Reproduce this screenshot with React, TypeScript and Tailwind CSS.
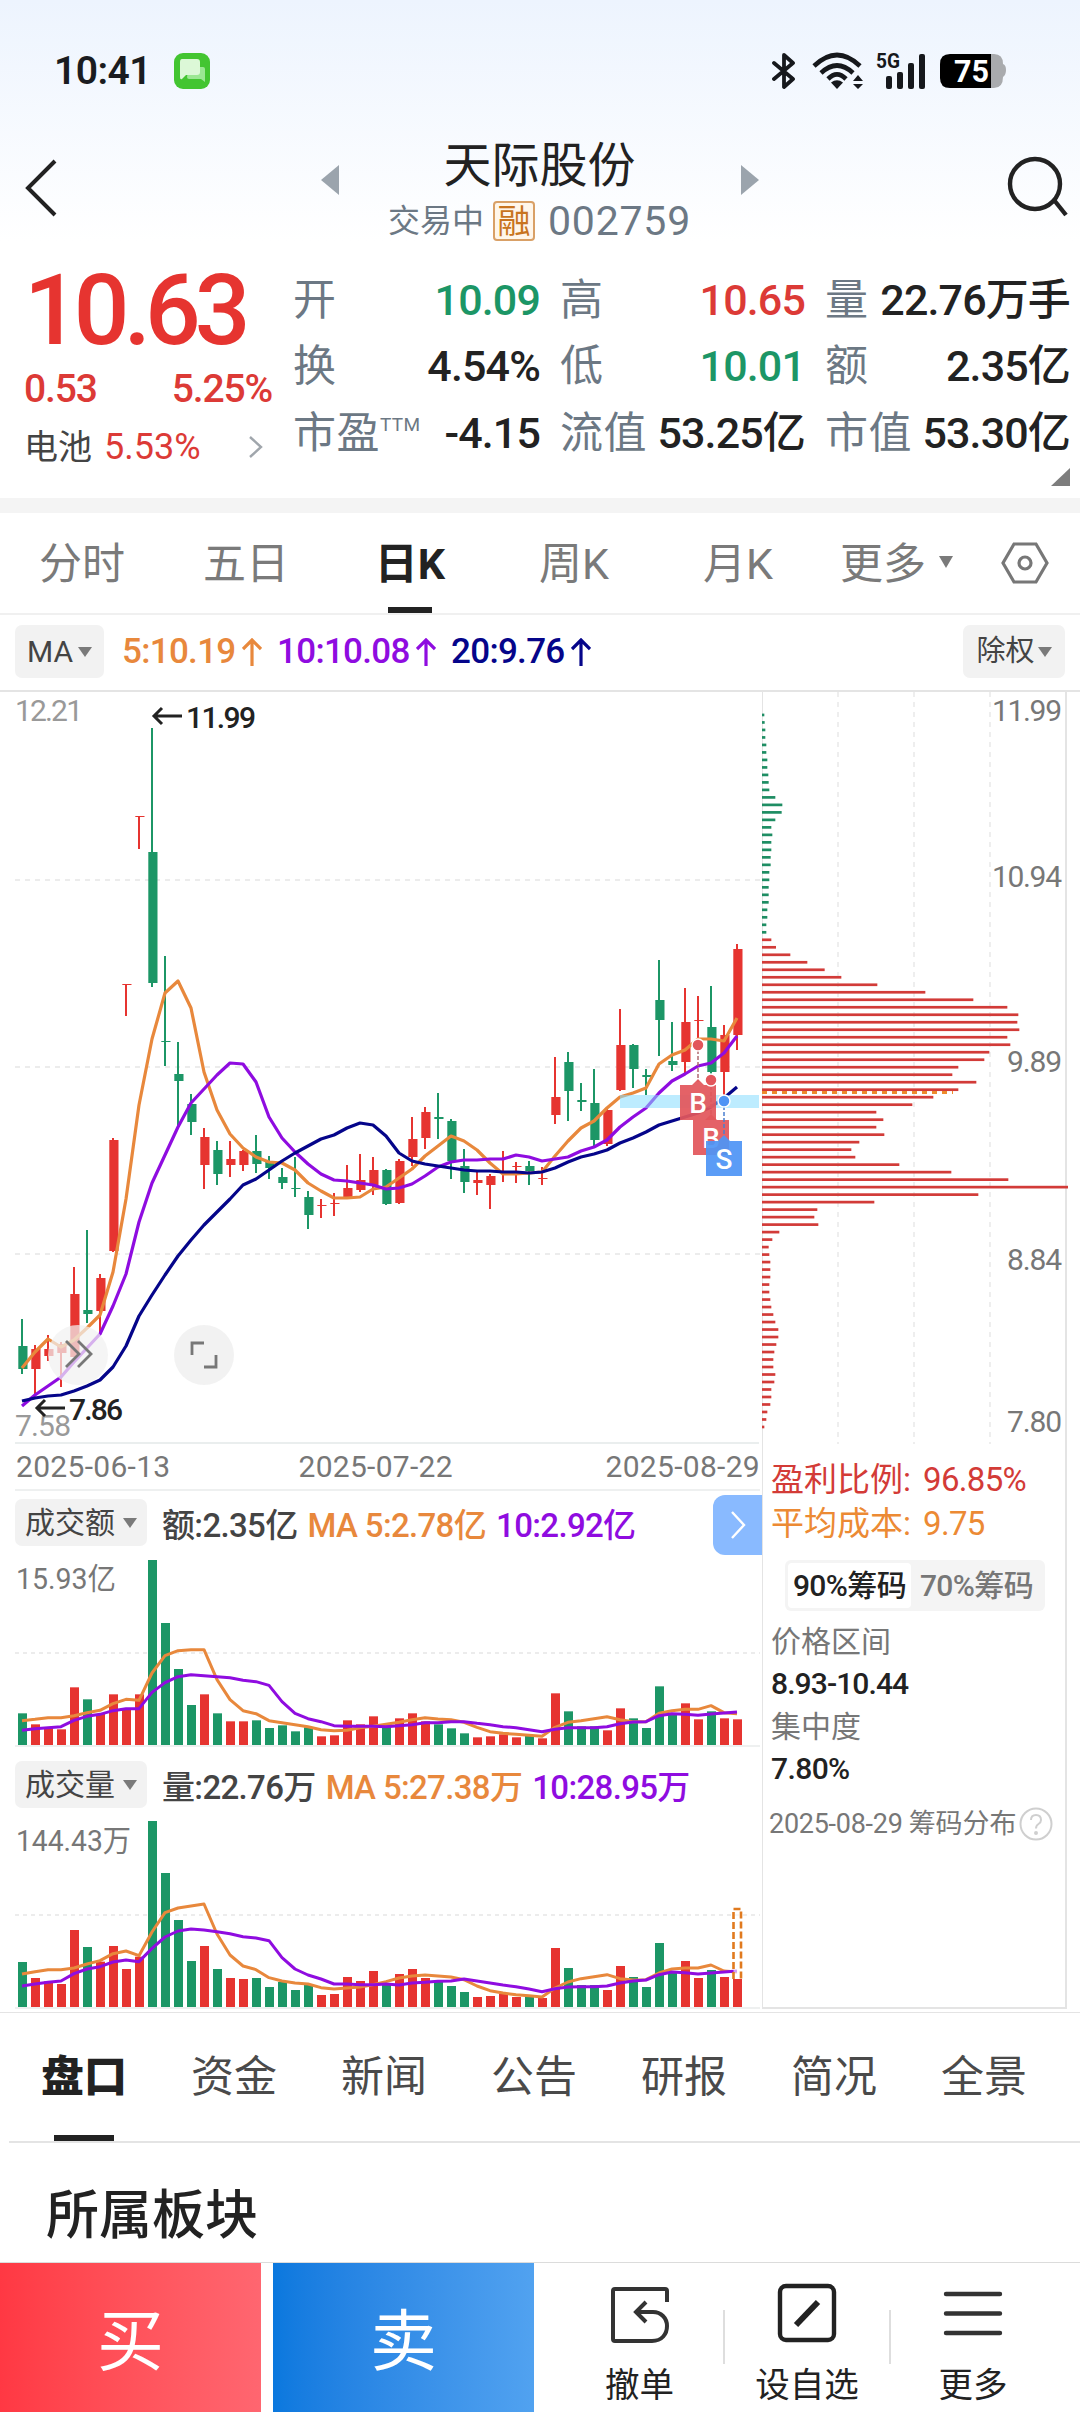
import type { ReactNode } from "react";

const UP = "#e63430";
const DOWN = "#1c9666";
const ORANGE = "#e8883c";
const PURPLE = "#8f0ce0";
const NAVY = "#05058a";

// [up, high, bodyTop, bodyBottom, low] in chart pixels
const candles = [
  [0, 1319, 1346, 1369, 1374], [1, 1345, 1349, 1369, 1396], [1, 1335, 1349, 1356, 1361], [1, 1342, 1344, 1353, 1387],
  [1, 1267, 1294, 1357, 1357], [0, 1230, 1310, 1314, 1323], [1, 1274, 1278, 1311, 1333], [1, 1138, 1140, 1251, 1252],
  [1, 984, 984, 985, 1016], [1, 816, 816, 817, 849], [0, 728, 852, 983, 987], [0, 956, 1041, 1042, 1066],
  [0, 1042, 1074, 1081, 1126], [0, 1094, 1104, 1122, 1135], [1, 1128, 1137, 1165, 1189], [0, 1141, 1150, 1174, 1185],
  [1, 1141, 1159, 1165, 1177], [1, 1150, 1151, 1165, 1171], [0, 1135, 1151, 1164, 1173], [0, 1156, 1161, 1168, 1179],
  [0, 1168, 1177, 1183, 1189], [0, 1157, 1188, 1189, 1197], [0, 1191, 1197, 1215, 1229], [1, 1199, 1205, 1206, 1218],
  [1, 1193, 1203, 1204, 1216], [1, 1165, 1188, 1197, 1199], [1, 1154, 1180, 1190, 1192], [1, 1157, 1170, 1185, 1195],
  [0, 1169, 1170, 1204, 1205], [1, 1159, 1161, 1203, 1204], [1, 1117, 1139, 1157, 1166], [1, 1107, 1112, 1138, 1149],
  [0, 1093, 1117, 1119, 1139], [0, 1119, 1121, 1161, 1179], [0, 1149, 1166, 1182, 1193], [1, 1172, 1180, 1183, 1195],
  [1, 1174, 1176, 1185, 1209], [1, 1151, 1172, 1173, 1182], [1, 1162, 1166, 1167, 1183], [0, 1161, 1166, 1171, 1185],
  [1, 1167, 1178, 1179, 1185], [1, 1057, 1097, 1115, 1124], [0, 1052, 1062, 1091, 1121], [0, 1083, 1100, 1102, 1111],
  [0, 1069, 1103, 1140, 1146], [1, 1109, 1110, 1144, 1146], [1, 1009, 1045, 1090, 1091], [0, 1044, 1045, 1069, 1088],
  [0, 1069, 1075, 1077, 1095], [0, 960, 1000, 1020, 1056], [0, 1022, 1061, 1065, 1071], [1, 988, 1022, 1062, 1073],
  [1, 996, 1020, 1021, 1043], [0, 986, 1027, 1072, 1076], [1, 1025, 1035, 1072, 1096], [1, 944, 949, 1035, 1050],
];

const ma5 = [
  1368, 1352, 1339, 1347, 1340, 1328, 1315, 1272, 1199, 1105, 1039, 993, 981, 1008, 1072, 1110, 1134, 1148, 1157, 1162,
  1163, 1170, 1183, 1191, 1198, 1198, 1197, 1189, 1187, 1178, 1169, 1156, 1146, 1136, 1141, 1150, 1163, 1174, 1174, 1173,
  1172, 1156, 1141, 1128, 1121, 1108, 1097, 1093, 1088, 1064, 1055, 1050, 1039, 1039, 1041, 1018,
];
const ma10 = [
  1406, 1395, 1386, 1377, 1362, 1348, 1334, 1306, 1274, 1222, 1183, 1155, 1127, 1103, 1089, 1075, 1063, 1064, 1082, 1117,
  1138, 1152, 1164, 1174, 1180, 1181, 1183, 1185, 1189, 1188, 1184, 1176, 1167, 1162, 1160, 1160, 1159, 1159, 1155, 1157,
  1161, 1159, 1157, 1151, 1147, 1140, 1127, 1117, 1108, 1093, 1081, 1074, 1066, 1063, 1053, 1036,
];
const ma20 = [
  1401, 1398, 1396, 1395, 1391, 1386, 1380, 1367, 1346, 1316, 1295, 1275, 1256, 1240, 1225, 1212, 1199, 1185, 1179, 1170,
  1161, 1153, 1146, 1139, 1135, 1128, 1123, 1125, 1136, 1153, 1161, 1164, 1166, 1168, 1170, 1171, 1171, 1172, 1172, 1173,
  1172, 1168, 1162, 1157, 1154, 1150, 1143, 1138, 1132, 1125, 1121, 1117, 1113, 1107, 1098, 1087,
];

// heights above the base line, in thirds of a pixel
const amount = {
  bars: [
    95, 62, 53, 47, 173, 137, 93, 152, 108, 152, 555, 366, 228, 120, 152, 95, 71, 71, 74, 51, 59, 41, 53, 26, 29, 74, 62,
    86, 59, 80, 95, 71, 62, 50, 35, 23, 26, 32, 23, 29, 20, 155, 101, 56, 56, 44, 110, 80, 51, 176, 95, 125, 77, 101, 80, 77,
  ],
  ma5: [
    73, 77, 82, 82, 88, 97, 104, 124, 137, 134, 216, 268, 283, 286, 286, 196, 136, 103, 94, 73, 67, 61, 55, 46, 43, 44, 52,
    56, 62, 68, 76, 82, 78, 76, 68, 53, 40, 35, 32, 29, 26, 53, 68, 73, 79, 85, 76, 70, 70, 95, 103, 107, 107, 118, 97, 94,
  ],
  ma10: [
    44, 49, 52, 55, 74, 86, 92, 103, 109, 109, 158, 187, 205, 211, 208, 205, 202, 194, 190, 179, 130, 95, 79, 70, 58, 56, 56,
    56, 55, 58, 61, 67, 67, 70, 70, 65, 61, 55, 52, 46, 40, 47, 52, 52, 52, 55, 64, 69, 70, 88, 94, 92, 89, 93, 96, 99,
  ],
};
const volume = {
  bars: [
    135, 87, 77, 69, 231, 180, 136, 183, 114, 151, 558, 402, 261, 138, 183, 114, 87, 84, 87, 60, 75, 51, 66, 36, 39, 90, 78,
    108, 69, 99, 114, 87, 78, 63, 45, 30, 33, 39, 30, 36, 27, 177, 117, 66, 66, 51, 123, 90, 60, 192, 102, 138, 87, 111, 90, 84,
  ],
  ma5: [
    99, 106, 112, 112, 117, 129, 139, 160, 168, 154, 225, 283, 297, 303, 309, 219, 156, 123, 112, 88, 78, 72, 69, 58, 54, 57,
    60, 67, 76, 87, 93, 96, 93, 90, 82, 63, 49, 42, 37, 34, 30, 57, 75, 85, 91, 97, 85, 81, 82, 102, 114, 117, 117, 126, 108, 105,
  ],
  ma10: [
    63, 69, 74, 78, 100, 114, 121, 135, 141, 136, 176, 210, 228, 234, 231, 226, 220, 211, 207, 199, 148, 114, 96, 84, 69, 69,
    67, 67, 69, 66, 72, 74, 77, 78, 84, 78, 72, 66, 61, 54, 46, 55, 60, 61, 61, 63, 72, 78, 81, 97, 105, 103, 99, 102, 105, 108,
  ],
};

const chips = [
  7, 8, 10, 10, 13, 13, 16, 16, 19, 20, 22, 40, 61, 59, 40, 28, 31, 28, 28, 26, 26, 22, 22, 20, 20, 20, 16, 16, 13, 13, 28,
  42, 85, 136, 188, 238, 346, 490, 634, 736, 769, 766, 772, 736, 745, 682, 667, 589, 571, 643, 589, 514, 451, 343, 364, 343,
  367, 292, 268, 280, 412, 568, 739, 918, 649, 337, 166, 157, 169, 52, 31, 20, 22, 25, 25, 25, 22, 22, 25, 28, 34, 40, 49,
  49, 43, 37, 34, 34, 40, 37, 28, 28, 25, 16, 13, 7,
];

const cx = (i: number) => 22 + i * 13;
const line = (ys: number[]) => ys.map((y, i) => `${cx(i)},${y}`).join(" ");

function Caret({ className = "" }: { className?: string }) {
  return (
    <svg viewBox="0 0 14 10" className={`h-[10px] w-[14px] ${className}`}>
      <path d="M0 0H14L7 10Z" fill="#7a7a7a" />
    </svg>
  );
}

function StatusBar() {
  return (
    <div className="flex h-[142px] shrink-0 items-start justify-between pt-[51px] pr-[74px] pl-[54px]">
      <div className="flex h-[40px] items-center">
        <span className="w-[96px] text-[39px] leading-none font-semibold tracking-[-0.015em] whitespace-nowrap text-[#1a1c20]">10:41</span>
        <svg viewBox="0 0 36 36" className="ml-[24px] h-[36px] w-[36px]">
          <rect width="36" height="36" rx="9" fill="#43c531" />
          <path d="M15 14h14q2 0 2 2v13l-4-3H15q-2 0-2-2Z" fill="#9be793" />
          <path d="M8 6h15q3 0 3 3v10q0 3-3 3H12l-4 4q-2 1-2-2V9q0-3 2-3Z" fill="#dcf8d7" />
        </svg>
      </div>
      <div className="flex h-[40px] items-center text-[#16181c]">
        <svg viewBox="0 0 24 38" className="h-[38px] w-[24px]" fill="none" stroke="currentColor" strokeWidth="3.8" strokeLinejoin="round" strokeLinecap="round">
          <path d="M2 11L21 27L12 35V3L21 11L2 27" />
        </svg>
        <svg viewBox="0 0 52 38" className="ml-[16px] h-[38px] w-[52px]" fill="none" stroke="currentColor" strokeWidth="4.6">
          <path d="M2 14Q25-8 48 14" />
          <path d="M9 21Q25 6 41 21" />
          <path d="M16 27Q25 18 34 27" />
          <path d="M25 37L19 30.500Q25 26 31 30.500Z" fill="currentColor" stroke="none" />
          <path d="M46 23l5 6h-10ZM46 37l5-5h-10Z" fill="currentColor" stroke="none" />
        </svg>
        <svg viewBox="0 0 50 38" className="ml-[12px] h-[38px] w-[50px] overflow-visible" fill="currentColor">
          <text x="0" y="16" fontSize="21" fontWeight="700" textLength="24" lengthAdjust="spacingAndGlyphs">5G</text>
          <rect x="10" y="24" width="6" height="13" rx="2" />
          <rect x="21" y="20" width="6" height="17" rx="2" />
          <rect x="32" y="11" width="6" height="26" rx="2" />
          <rect x="43" y="2" width="6" height="35" rx="2" />
        </svg>
        <svg viewBox="0 0 66 36" className="ml-[14px] h-[36px] w-[66px]">
          <path d="M50 1h4q9 0 9 10 3 1 3 6t-3 7q0 11-9 11h-4Z" fill="#a9abae" />
          <path d="M10 1H51V35H10Q0 35 0 25V11Q0 1 10 1Z" fill="#000" />
          <text x="14" y="29" fontSize="31" fontWeight="700" fill="#fff" textLength="35" lengthAdjust="spacingAndGlyphs">75</text>
        </svg>
      </div>
    </div>
  );
}

function Header() {
  return (
    <header className="flex h-[112px] shrink-0 justify-between pr-[11px] pl-[24px]">
      <svg viewBox="0 0 34 60" className="mt-[16px] h-[60px] w-[34px]" fill="none" stroke="#222" strokeWidth="4">
        <path d="M31 3L4 30L31 57" />
      </svg>
      <div className="ml-[14px] flex">
        <svg viewBox="0 0 18 30" className="mt-[23px] h-[30px] w-[18px]"><path d="M18 0V30L0 15Z" fill="#9ba4ad" /></svg>
        <div className="flex w-[402px] flex-col items-center">
          <h1 className="text-[48px] leading-[48px] font-normal text-[#222]">天际股份</h1>
          <div className="mt-[10px] flex h-[42px] items-center text-[#6c7884]">
            <span className="text-[32px] leading-none">交易中</span>
            <span className="ml-[9px] flex h-[40px] w-[42px] items-center justify-center rounded-[4px] border-2 border-[#d9a066] bg-[#fff6ea] text-[33px] leading-none text-[#c87420]">
              融
            </span>
            <span className="ml-[13px] text-[41px] leading-none tracking-[0.02em]">002759</span>
          </div>
        </div>
        <svg viewBox="0 0 18 30" className="mt-[23px] h-[30px] w-[18px]"><path d="M0 0V30L18 15Z" fill="#9ba4ad" /></svg>
      </div>
      <svg viewBox="0 0 62 62" className="mt-[14px] h-[62px] w-[62px]" fill="none" stroke="#222" strokeWidth="4.4">
        <circle cx="28" cy="28" r="25" />
        <path d="M47 44L59 59" />
      </svg>
    </header>
  );
}

const stats = [
  ["开", "10.09", "text-[#1c9666]"], ["高", "10.65", "text-[#dc3a36]"], ["量", "22.76万手", "text-[#222]"],
  ["换", "4.54%", "text-[#222]"], ["低", "10.01", "text-[#1c9666]"], ["额", "2.35亿", "text-[#222]"],
  ["市盈", "-4.15", "text-[#222]"], ["流值", "53.25亿", "text-[#222]"], ["市值", "53.30亿", "text-[#222]"],
];

function Quote() {
  return (
    <section className="flex h-[244px] shrink-0 pl-[24px]">
      <div className="w-[269px] shrink-0 text-[#dc3a36]">
        <div className="mt-[7px] text-[98px] leading-[100px] font-medium tracking-[-0.06em] text-[#e63430]">10.63</div>
        <div className="mt-[4px] flex h-[48px] w-[248px] items-center justify-between text-[39px] leading-none font-medium tracking-[-0.03em]">
          <span>0.53</span>
          <span>5.25%</span>
        </div>
        <div className="mt-[7px] flex h-[54px] items-center">
          <span className="text-[34px] leading-none text-[#444]">电池</span>
          <span className="ml-[12px] w-[144px] text-[36px] leading-none">5.53%</span>
          <svg viewBox="0 0 16 24" className="h-[24px] w-[16px]" fill="none" stroke="#a0a6ac" strokeWidth="2.4"><path d="M2 2L13 12L2 22" /></svg>
        </div>
      </div>
      <div>
        <div className="mt-[13px] grid grid-cols-[247px_245px_245px] gap-x-[20px]">
          {stats.map(([label, value, color]) => (
            <div key={label} className="flex h-[66.500px] items-center justify-between whitespace-nowrap">
              <span className="flex text-[43px] leading-none tracking-[0.01em] text-[#6c7884]">
                {label}
                {label === "市盈" && <sup className="top-0 mt-[3px] text-[19px] leading-none tracking-[0.02em]">TTM</sup>}
              </span>
              <span className={`text-[43px] leading-none font-medium tracking-[-0.02em] ${color}`}>{value}</span>
            </div>
          ))}
        </div>
        <svg viewBox="0 0 19 18" className="mt-[1px] ml-auto h-[18px] w-[19px]"><path d="M19 0V18H0Z" fill="#7d7d7d" /></svg>
      </div>
    </section>
  );
}

function PeriodTabs() {
  return (
    <nav className="flex h-[100px] shrink-0 text-[43px] leading-none text-[#7a7a7a]">
      {["分时", "五日", "日K", "周K", "月K"].map((t) => (
        <div key={t} className="relative flex w-[164px] items-center justify-center pt-[2px]">
          <span className={t === "日K" ? "font-bold text-[#222]" : ""}>{t}</span>
          {t === "日K" && <i className="absolute bottom-0 h-[6px] w-[44px] bg-[#222]" />}
        </div>
      ))}
      <div className="flex items-center pt-[2px] pl-[20px]">
        更多
        <Caret className="mt-[-4px] ml-[13px] scale-y-120" />
      </div>
      <svg viewBox="0 0 48 42" className="mt-[29px] ml-[48px] h-[42px] w-[48px]" fill="none" stroke="#777" strokeWidth="3.200">
        <path d="M13 2H35L46 21L35 40H13L2 21Z" />
        <circle cx="24" cy="21" r="6" />
      </svg>
    </nav>
  );
}

function Tag({ children, className = "" }: { children: ReactNode; className?: string }) {
  return (
    <div className={`flex items-center justify-center rounded-[7px] bg-[#f2f2f2] leading-none text-[#444] ${className}`}>
      {children}
    </div>
  );
}

function Arrow({ className }: { className: string }) {
  return (
    <svg viewBox="0 0 20 28" className={`h-[28px] w-[20px] ${className}`} fill="none" stroke="currentColor" strokeWidth="3.200">
      <path d="M10 28V2M1 11L10 2L19 11" />
    </svg>
  );
}

function MaBar() {
  return (
    <div className="flex h-[77px] shrink-0 items-center pr-[15px] pl-[15px] shadow-[inset_0_2px_0_#f0f0f0]">
      <Tag className="h-[53px] w-[89px] text-[30px]">MA<Caret className="ml-[5px]" /></Tag>
      <div className="ml-[18px] flex items-center text-[35px] leading-none font-medium tracking-[-0.02em] whitespace-nowrap">
        <span className="w-[120px] text-[#e8883c]">5:10.19</span>
        <Arrow className="text-[#e8883c]" />
        <span className="ml-[15px] w-[139px] text-[#8f0ce0]">10:10.08</span>
        <Arrow className="text-[#8f0ce0]" />
        <span className="ml-[15px] w-[120px] text-[#05058a]">20:9.76</span>
        <Arrow className="text-[#05058a]" />
      </div>
      <Tag className="ml-auto h-[53px] w-[102px] text-[29px]">除权<Caret className="ml-[3px]" /></Tag>
    </div>
  );
}

function TradeMark({ x, y, fill, children }: { x: number; y: number; fill: string; children: string }) {
  return (
    <g>
      <path d={`M${x - 18} ${y}H${x - 6}L${x} ${y - 6}L${x + 6} ${y}H${x + 18}V${y + 35}H${x - 18}Z`} fill={fill} fillOpacity="0.93" />
      <text x={x} y={y + 28} fontSize="28" fontWeight="500" fill="#fff" textAnchor="middle">{children}</text>
    </g>
  );
}

function KLine() {
  return (
    <svg viewBox="0 692 762 752" className="block h-[752px] w-[762px]">
      <g stroke="#ececec" strokeWidth="2" strokeDasharray="5 5">
        <path d="M15 880H760M15 1067H760M15 1254H760" />
      </g>
      <path d="M15 1443H759" stroke="#eaeeee" strokeWidth="2" />
      <text x="15" y="721" fontSize="30" fill="#999" textLength="68">12.21</text>
      <text x="15" y="1436" fontSize="30" fill="#999" textLength="56">7.58</text>
      {candles.map(([up, high, top, bottom, low], i) => (
        <g key={i} fill={up ? UP : DOWN}>
          <rect x={cx(i) - 1} y={high} width="2" height={low - high} />
          <rect x={cx(i) - 3.700} y={top} width="9.200" height={Math.max(bottom - top, 1)} />
        </g>
      ))}
      <g fill="none" strokeWidth="3.200" strokeLinejoin="round">
        <polyline points={line(ma5)} stroke={ORANGE} />
        <polyline points={line(ma10)} stroke={PURPLE} />
        <polyline points={line(ma20)} stroke={NAVY} />
      </g>
      <rect x="620" y="1095" width="139" height="13" fill="#87dcff" fillOpacity="0.55" />
      <path d="M698 1050V1082M711 1086V1117" stroke="#b06a70" strokeWidth="1.500" strokeDasharray="4 2" />
      <TradeMark x={698} y={1085} fill="#e2565b">B</TradeMark>
      <TradeMark x={711} y={1120} fill="#e2565b">B</TradeMark>
      <path d="M724 1106V1137" stroke="#4a7fd0" strokeWidth="1.500" strokeDasharray="4 2" />
      <TradeMark x={724} y={1141} fill="#4f94f5">S</TradeMark>
      <g stroke="#fff" strokeWidth="1.500">
        <circle cx="698" cy="1045" r="6" fill="#e2565b" />
        <circle cx="711" cy="1080" r="6" fill="#e2565b" />
        <circle cx="724" cy="1101" r="6" fill="#4f94f5" />
      </g>
      <g fill="none" stroke="#222" strokeWidth="3">
        <path d="M182 716H154M162 708L154 716L162 724" />
        <path d="M65 1408H37M45 1400L37 1408L45 1416" />
      </g>
      <text x="186" y="728" fontSize="30" fontWeight="500" fill="#222" textLength="70">11.99</text>
      <text x="69" y="1420" fontSize="30" fontWeight="500" fill="#222" textLength="54">7.86</text>
      <g fill="#f1f1f1" fillOpacity="0.72">
        <circle cx="78" cy="1355" r="30" />
        <circle cx="204" cy="1355" r="30" fillOpacity="0.95" />
      </g>
      <g fill="none" stroke="#777" strokeWidth="2.800">
        <path d="M66 1341L79 1354L66 1367M78 1341L91 1354L78 1367" />
        <path d="M192 1355V1343H204M204 1367H216V1355" />
      </g>
    </svg>
  );
}

function ChipChart() {
  return (
    <svg viewBox="762 692 318 752" className="block h-[752px] w-[318px]">
      <path d="M838 692V1444M914 692V1444M990 692V1444" stroke="#eeeeee" strokeWidth="2" strokeDasharray="5 5" />
      {chips.map((w, i) => (
        <rect key={i} x="762" y={713.600 + i * 7.495} width={w / 3} height="2.700" fill={i < 30 ? "#1e8d63" : "#d23b38"} />
      ))}
      <path d="M762 1092.500H953" stroke="#ee8a2c" strokeWidth="2.800" strokeDasharray="5 5" />
      <g fontSize="30" fill="#777" textAnchor="end">
        <text x="1062" y="721" textLength="70">11.99</text>
        <text x="1062" y="887" textLength="70">10.94</text>
        <text x="1062" y="1072" textLength="55">9.89</text>
        <text x="1062" y="1270" textLength="55">8.84</text>
        <text x="1062" y="1432" textLength="55">7.80</text>
      </g>
    </svg>
  );
}

type Series = { bars: number[]; ma5: number[]; ma10: number[] };

function BarChart({ data, label, forecast }: { data: Series; label: string; forecast?: boolean }) {
  const base = 190;
  const y = (v: number) => base - v / 3;
  return (
    <svg viewBox="0 0 762 192" className="block h-[192px] w-[762px]">
      <path d="M15 98H760" stroke="#ececec" strokeWidth="2" strokeDasharray="4 4" />
      <path d="M15 191H760" stroke="#eef0f0" strokeWidth="2" />
      <text x="16" y="34" fontSize="30" fill="#777" textLength={label.length > 6 ? 115 : 100} lengthAdjust="spacingAndGlyphs">{label}</text>
      {data.bars.map((v, i) => (
        <rect key={i} x={cx(i) - 4} y={y(v)} width="9" height={v / 3} fill={candles[i][0] ? UP : DOWN} />
      ))}
      <g fill="none" strokeWidth="3" strokeLinejoin="round">
        <polyline points={line(data.ma5.map(y))} stroke={ORANGE} />
        <polyline points={line(data.ma10.map(y))} stroke={PURPLE} />
      </g>
      {forecast && <path d="M733.500 162V92H741V162" fill="#fff" fillOpacity="0.6" stroke="#e07a1f" strokeWidth="2.600" strokeDasharray="7 3" />}
    </svg>
  );
}

function IndicatorHead({ tag, items, children }: { tag: string; items: string[]; children?: ReactNode }) {
  return (
    <div className="flex h-[64px] items-start pt-[8px] pl-[15px]">
      <Tag className="h-[47px] w-[132px] text-[30px]">{tag}<Caret className="ml-[8px]" /></Tag>
      <div className="ml-[15px] flex h-[53px] items-center gap-[10px] text-[33px] leading-none font-medium tracking-[-0.02em] whitespace-nowrap">
        <span className="text-[#444]">{items[0]}</span>
        <span className="text-[#e8883c]">{items[1]}</span>
        <span className="text-[#8f0ce0]">{items[2]}</span>
      </div>
      {children}
    </div>
  );
}

function ChipInfo() {
  return (
    <div className="flex flex-col pl-[8px] leading-none whitespace-nowrap">
      <div className="mt-[13px] flex h-[44px] items-center gap-[12px] text-[33px] text-[#d33b37]"><span>盈利比例:</span><span className="tracking-[-0.02em]">96.85%</span></div>
      <div className="flex h-[45px] items-center gap-[12px] text-[33px] text-[#ec8a34]"><span>平均成本:</span><span className="tracking-[-0.02em]">9.75</span></div>
      <div className="mt-[14px] ml-[14px] flex h-[51px] w-[260px] rounded-[6px] bg-[#f4f4f4] p-[3px] text-[30px]">
        <span className="flex w-[123px] items-center justify-center rounded-[4px] bg-white font-medium tracking-[-0.02em] text-[#222]">90%筹码</span>
        <span className="flex flex-1 items-center justify-center font-medium tracking-[-0.02em] text-[#777]">70%筹码</span>
      </div>
      <div className="mt-[10px] text-[30px] text-[#777]">
        <p className="flex h-[42px] items-center">价格区间</p>
        <p className="flex h-[42.500px] items-center font-medium tracking-[-0.03em] text-[#222]">8.93-10.44</p>
        <p className="flex h-[42px] items-center">集中度</p>
        <p className="flex h-[42.500px] items-center font-medium tracking-[-0.02em] text-[#222]">7.80%</p>
      </div>
      <div className="mt-[14px] ml-[-2px] flex h-[40px] items-center text-[27px] text-[#777]">
        <span className="tracking-[-0.01em]">2025-08-29</span>
        <span className="ml-[6px]">筹码分布</span>
        <svg viewBox="0 0 34 34" className="ml-[2px] h-[34px] w-[34px]" fill="none" stroke="#cfcfcf" strokeWidth="2">
          <circle cx="17" cy="17" r="15.500" />
          <path d="M12 13Q12 8 17 8T22 13Q22 15.500 19.500 17T17 21.500" />
          <circle cx="17" cy="26" r="1" fill="#cfcfcf" />
        </svg>
      </div>
    </div>
  );
}

function Charts() {
  return (
    <section className="flex h-[1323px] shrink-0 border-t-2 border-b border-[#e4e4e4]">
      <div className="w-[762px] shrink-0">
        <KLine />
        <div className="mr-[2px] ml-[15px] flex h-[47px] items-center border-b-2 border-[#eef0f0] pl-[1px] text-[30px] leading-none tracking-[0.01em] text-[#777]">
          <span>2025-06-13</span>
          <span className="ml-[128px]">2025-07-22</span>
          <span className="ml-auto">2025-08-29</span>
        </div>
        <IndicatorHead tag="成交额" items={["额:2.35亿", "MA 5:2.78亿", "10:2.92亿"]}>
          <div className="mt-[-4px] ml-auto flex h-[60px] w-[49px] items-center justify-center rounded-l-[12px] bg-[#89baff]">
            <svg viewBox="0 0 16 28" className="h-[28px] w-[16px]" fill="none" stroke="#fff" strokeWidth="2.400"><path d="M2 1L14 14L2 27" /></svg>
          </div>
        </IndicatorHead>
        <BarChart data={amount} label="15.93亿" />
        <div className="h-[6px]" />
        <IndicatorHead tag="成交量" items={["量:22.76万", "MA 5:27.38万", "10:28.95万"]} />
        <BarChart data={volume} label="144.43万" forecast />
      </div>
      <div className="h-[1317px] w-[305px] border-r-2 border-b-2 border-l border-[#e4e4e4]">
        <div className="ml-[-1px] h-[752px] w-[318px]">
          <ChipChart />
        </div>
        <ChipInfo />
      </div>
    </section>
  );
}

function InfoTabs() {
  return (
    <nav className="ml-[9px] flex h-[130px] shrink-0 border-b-2 border-[#e4e4e4] text-[43px] leading-none text-[#4a4a4a]">
      {["盘口", "资金", "新闻", "公告", "研报", "简况", "全景"].map((t, i) => (
        <div key={t} className="relative flex w-[150px] items-center justify-center">
          <span className={i === 0 ? "font-black text-[#222]" : ""}>{t}</span>
          {i === 0 && <i className="absolute bottom-0 h-[6px] w-[60px] bg-[#222]" />}
        </div>
      ))}
    </nav>
  );
}

function ActionBar() {
  return (
    <footer className="flex h-[150px] shrink-0 border-t border-[#dcdcdc] text-[#222]">
      <button className="flex w-[261px] items-center justify-center bg-linear-to-r from-[#ff3843] to-[#ff6670] pt-[9px] text-[67px] leading-none text-white">买</button>
      <button className="ml-[12px] flex w-[261px] items-center justify-center bg-linear-to-r from-[#0a78de] to-[#51a2f0] pt-[9px] text-[67px] leading-none text-white">卖</button>
      <div className="ml-[22px] flex text-[34.500px] leading-none">
        <div className="flex w-[167px] flex-col items-center">
          <svg viewBox="0 0 60 60" className="mt-[21px] h-[60px] w-[60px]" fill="none" stroke="#333" strokeWidth="4">
            <path d="M57 18V7Q57 5 55 5H5Q3 5 3 7V55Q3 57 5 57H42C52 57 57 50 57 42S51 28 43 28H27" />
            <path d="M36 18L26 28L36 38" />
          </svg>
          <span className="mt-[24px]">撤单</span>
        </div>
        <i className="mt-[47px] h-[54px] w-[2px] bg-[#dedede]" />
        <div className="flex w-[164px] flex-col items-center">
          <svg viewBox="0 0 60 60" className="mt-[20px] h-[60px] w-[60px]" fill="none" stroke="#222">
            <rect x="3" y="3" width="54" height="54" rx="6" strokeWidth="4.400" />
            <path d="M19 42L41 19" strokeWidth="6" />
          </svg>
          <span className="mt-[25px]">设自选</span>
        </div>
        <i className="mt-[47px] h-[54px] w-[2px] bg-[#dedede]" />
        <div className="flex w-[164px] flex-col items-center">
          <svg viewBox="0 0 60 60" className="mt-[21px] h-[60px] w-[60px]" fill="none" stroke="#333" strokeWidth="4.400" strokeLinecap="round">
            <path d="M3 10H57M3 29.500H57M3 49H57" />
          </svg>
          <span className="mt-[24px]">更多</span>
        </div>
      </div>
    </footer>
  );
}

export default function App() {
  return (
    <div className="flex h-[2412px] w-[1080px] flex-col overflow-hidden bg-white bg-linear-to-b from-[#edf4fe] to-white to-[10%] font-[Roboto,'Noto_Sans_CJK_SC',sans-serif]">
      <StatusBar />
      <Header />
      <Quote />
      <div className="h-[15px] shrink-0 bg-[#f4f4f4]" />
      <PeriodTabs />
      <MaBar />
      <Charts />
      <InfoTabs />
      <div className="flex h-[119px] shrink-0 items-center pt-[28px] pl-[46px]">
        <h2 className="text-[53px] leading-none font-medium text-[#222]">所属板块</h2>
      </div>
      <ActionBar />
    </div>
  );
}
